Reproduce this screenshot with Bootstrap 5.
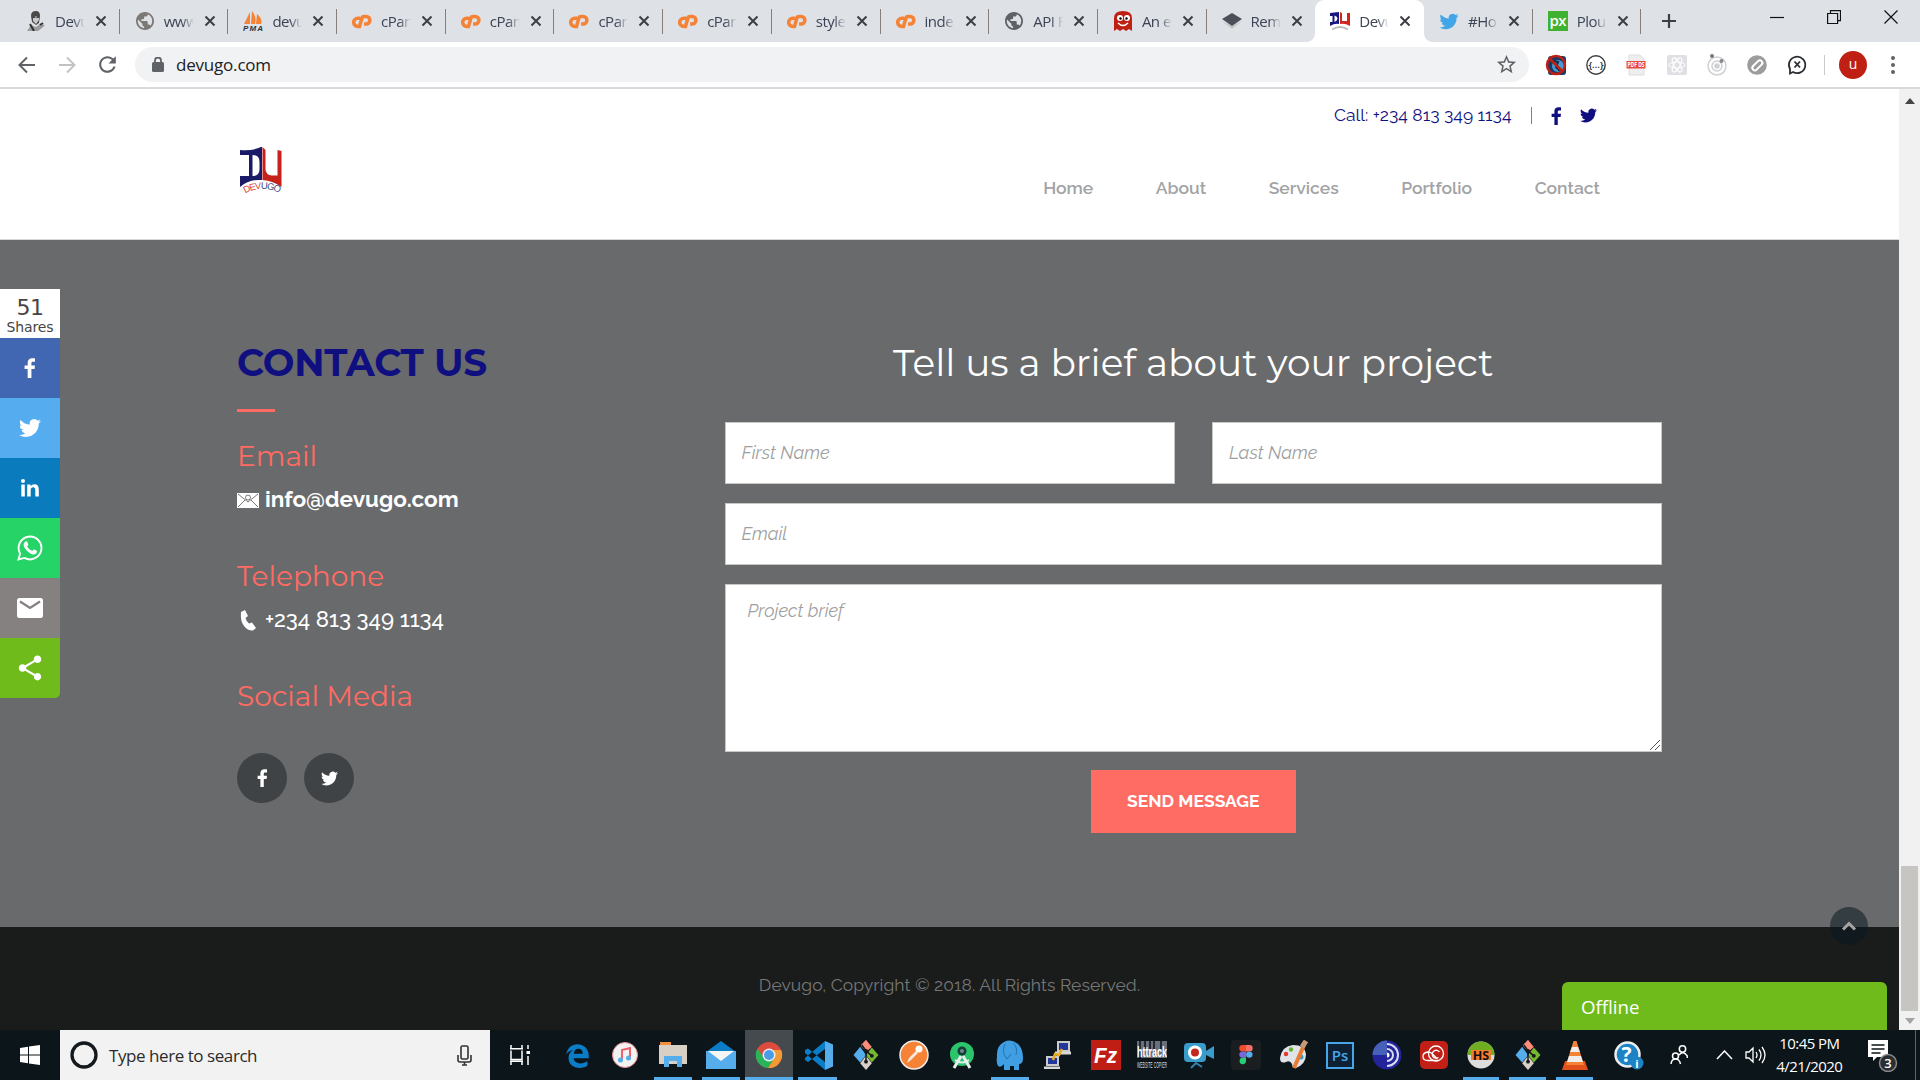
<!DOCTYPE html>
<html lang="en">
<head>
<meta charset="utf-8">
<title>Devugo</title>
<link href="https://cdn.jsdelivr.net/npm/bootstrap@5.3.0/dist/css/bootstrap.min.css" rel="stylesheet">
<style>
body{width:1920px;height:1080px;overflow:hidden;font-family:"Open Sans",sans-serif;color:#202124}
svg{display:block;flex:none}
/* browser chrome */
.tab-strip{height:42px;background:#dee1e6;padding-left:11px}
.b-tab{width:108.7px;padding-left:15px;position:relative}
.b-tab::after{content:"";position:absolute;right:0;top:9px;height:25px;width:1px;background:#85807c}
.b-tab.on{background:#fff;border-radius:9px 9px 0 0;height:42px}
.b-tab.on::after,.b-tab.on::before{content:"";position:absolute;top:auto;bottom:0;width:8px;height:8px}
.b-tab.on::before{left:-8px;background:radial-gradient(circle at 0 0,transparent 7.5px,#fff 8px)}
.b-tab.on::after{right:-8px;background:radial-gradient(circle at 100% 0,transparent 7.5px,#fff 8px)}
.b-tab.quiet::after{display:none}
.b-title{width:30px;margin-left:9px;font-size:15px;letter-spacing:-.5px;overflow:hidden;white-space:nowrap;-webkit-mask-image:linear-gradient(90deg,#000 60%,transparent);color:#3c4354}
.b-x{margin-left:10px}
.win-ctl{gap:43px;padding-right:22px;margin-bottom:9px}
.tool-row{height:47px;background:#fff;border-bottom:2px solid #d9d9de}
.nav-ic{gap:16px;padding-left:15px;width:135px}
.omni{height:35px;width:1394px;border-radius:18px;background:#f1f2f4;padding:0 11px 0 15px}
.omni-url{font-size:17px;letter-spacing:-.2px;margin-left:12px}
.omni .lock-ic{margin-left:2px}
.ext{gap:16.2px;padding-left:15px}
.tool-end{gap:14px;padding-right:23px}
.tool-sep{width:1px;height:20px;background:#c9cacd}
.me{width:28px;height:28px;background:#c02013;color:#fff;font-size:14px;line-height:26px}
/* site */
.view{height:941px}
.site{width:1899px;position:relative}
.wrap{width:1462.5px;margin:0 auto;padding:0 18.75px}
.site-head{height:151px;background:#fff;border-bottom:1px solid #d8d8d8}
.brand-ic{margin-top:56px}
.rale{font-family:Raleway,Lato,sans-serif}
.mont{font-family:Montserrat,Inter,sans-serif}
.navy{color:#100f80}
.coral{color:#ff6b62}
.call-row{height:53px;padding-right:65px;font-size:17.5px}
.call-sep{width:1.5px;height:17px;background:#e4564c;margin:0 19px}
.call-tw{margin-left:18px}
.menu-row{height:60px;gap:62.5px;padding-right:62px;font-size:17.5px;font-weight:600;color:#a2a3a5}
.contact{height:687px;background:#696a6c;padding-top:101px}
.row-g{--bs-gutter-x:37.5px}
.h-big{font-size:37.5px;line-height:43px;height:44px;margin:0;white-space:nowrap}
.h-us{letter-spacing:-.2px}
.h-mid{font-size:28px;line-height:34px;margin:0;font-weight:400;white-space:nowrap}
.h-line{width:38px;height:3px;background:#ff6b62;margin:24px 0 27px}
.info-l{height:30px;margin:12px 0 44px;color:#fff;font-size:22.5px;gap:6px}
.info-tel{font-size:22.2px}
.socials{gap:17px;margin-top:40px}
.round-ic{width:50px;height:50px;background:#3f4345}
.fld{height:62px;border:1px solid #c9c7c3;border-radius:0;background:#fff;padding:0 16px 1px;font-style:italic;font-size:18px}
.fld::placeholder{color:#9f9f9f;opacity:1}
textarea.fld{height:168px;padding:12px 22px;resize:none}
.stack{gap:19px;margin-top:37px}
.send{width:205px;height:63px;margin-top:-1px;border-radius:0;background:#fe6c63;color:#fff;font-weight:700;font-size:17.5px;border:0;letter-spacing:0}
.foot{height:103px;background:#1a1c1b;color:#767777;font-size:17.5px;padding-top:14px;letter-spacing:.05px}
.share{position:absolute;left:0;top:200px;width:60px}
.share>div{height:60px}
.share .cnt{height:49px;background:#fff;color:#454545;font-family:"DejaVu Sans",sans-serif;line-height:1}
.cnt-n{font-size:22px;padding-top:8px;letter-spacing:-.6px}
.cnt-l{font-size:14px;padding-top:1px;letter-spacing:-.1px}
.s-fb{background:#4267b2;border-top-right-radius:4px}
.s-tw{background:#55acee}
.s-in{background:#0a7bbd}
.s-wa{background:#25d366}
.s-ml{background:#858180}
.s-sh{background:#6fbb1b;border-bottom-right-radius:5px}
.to-top{position:absolute;left:1830px;top:818px;width:38px;height:38px;background:rgba(10,24,32,.55)}
.chat{position:absolute;left:1562px;top:893px;width:325px;height:48px;background:#6fbb1b;border-radius:6px 6px 0 0;color:#fff;font-size:18.700px;padding:2px 0 0 19px}
.sbar{width:21px;background:#f1f1f1}
.sb-up{margin-top:9px}
.sb-down{margin:7px 0 6px}
.thumb{width:17px;height:145px;background:#c6c5c1;margin-top:auto}
/* taskbar */
.task{height:50px;background:#0b151a}
.t-start{width:60px}
.t-search{width:430px;background:#f2f2f2;padding:0 18px 0 10px;font-size:17px;color:#2b2b2b}
.t-hint{letter-spacing:-.44px;padding-top:2px;margin-left:11px}
.t-view{width:63px;padding-right:4px}
.t-app{width:46.94px;position:relative}
.t-wide{width:48.1px}
.t-app.run::after{content:"";position:absolute;left:5px;right:5px;bottom:0;height:3px;background:#55adec}
.t-app.cur{background:#454a4e}
.t-app.cur::after{left:0!important;right:0!important}
.t-clock{font-size:15px;line-height:23px;width:86px;color:#fff;letter-spacing:-.55px;white-space:nowrap}
.tray-help{margin-left:16px}
.tray-ppl{margin-left:26px}
.tray-up{margin-left:28px}
.tray-vol{margin-left:12px}
.tray-note{margin-left:16px}
.desk-edge{width:5px;border-left:1px solid #5c6468}
</style>
<script src="https://cdn.jsdelivr.net/npm/bootstrap@5.3.0/dist/js/bootstrap.bundle.min.js"></script>
</head>
<body class="d-flex flex-column">
<svg width="0" height="0" class="position-absolute">
<defs>
<symbol id="x" viewBox="0 0 12 12"><path d="M1.500 1.500l9 9m0-9l-9 9" stroke="#3c3f43" stroke-width="2" fill="none"/></symbol>
<symbol id="cp" viewBox="0 0 24 20"><g fill="none" stroke="#f58235" stroke-width="4.200"><path d="M10 6H7a4.500 4.500 0 0 0 0 10h2l3-10.500Q12.500 4 14.500 4H17a4.500 4.500 0 0 1 0 9h-2.500"/></g></symbol>
<symbol id="globe" viewBox="1 2 22 20"><path d="M12 2C6.480 2 2 6.480 2 12s4.480 10 10 10 10-4.480 10-10S17.520 2 12 2zm-1 17.930c-3.950-.49-7-3.850-7-7.930 0-.62.08-1.210.21-1.790L9 15v1c0 1.100.9 2 2 2v1.930zm6.900-2.540c-.26-.81-1-1.390-1.900-1.390h-1v-3c0-.55-.45-1-1-1H8v-2h2c.55 0 1-.45 1-1V7h2c1.100 0 2-.9 2-2v-.41c2.930 1.190 5 4.060 5 7.410 0 2.080-.8 3.970-2.100 5.390z"/></symbol>
<symbol id="tw" viewBox="0 0 24 24"><path d="M23.953 4.570a10 10 0 01-2.825.775 4.958 4.958 0 002.163-2.723c-.951.555-2.005.959-3.127 1.184a4.920 4.920 0 00-8.384 4.482C7.690 8.095 4.067 6.130 1.640 3.162a4.822 4.822 0 00-.666 2.475c0 1.710.87 3.213 2.188 4.096a4.904 4.904 0 01-2.228-.616v.06a4.923 4.923 0 003.946 4.827 4.996 4.996 0 01-2.212.085 4.936 4.936 0 004.604 3.417 9.867 9.867 0 01-6.102 2.105c-.39 0-.779-.023-1.170-.067a13.995 13.995 0 007.557 2.209c9.053 0 13.998-7.496 13.998-13.985 0-.21 0-.42-.015-.63A9.935 9.935 0 0024 4.590z"/></symbol>
<symbol id="fb" viewBox="0 0 14 24"><path d="M13 .5v4h-2.500C9 4.500 8.700 5.300 8.700 6.500V9H13l-.6 4.200H8.700V24H4.200V13.200H.5V9h3.700V5.800C4.200 2.200 6.400.3 9.700.3c1.500 0 2.800.1 3.300.2z"/></symbol>
<symbol id="git" viewBox="0 0 30 36"><path fill="#fb6f66" d="M9 6l6-6 7 8-7 6z"/><path fill="#fb8f7c" d="M9 7l6 7 6-5-6-9z"/><path fill="#55adec" d="M8 8L0 18l8 9 7-9z"/><path fill="#76b82e" d="M22 9l8 9-8 9-7-9z"/><path fill="#d9cfc6" d="M8 28l7 8 7-8-7-9z"/><path d="M10 6l5 7v14M15 13l7 6" stroke="#14191b" stroke-width="1.800" fill="none"/><circle cx="15" cy="13" r="2.300" fill="#14191b"/><circle cx="15" cy="26" r="2.300" fill="#14191b"/><circle cx="22" cy="19" r="2.300" fill="#14191b"/></symbol>
</defs>
</svg>

<div class="tab-strip d-flex align-items-center">
  <div class="b-tab d-flex align-items-center h-100"><svg width="20" height="20" viewBox="0 0 20 20"><path d="M5 5q0-5 5-5 4 0 4 5l-1 7-3 2-4-3z" fill="#4a4a4a"/><path d="M7 5h6v4l-3 4-3-3z" fill="#c9c9c9"/><path d="M7 6h2.500m1 0H13" stroke="#222" stroke-width="1.500"/><path d="M1 20l4-6 5 2 4-3 5 1-3 3-4 3z" fill="#9b9b9b"/><path d="M4 13l4 7M14 14l3-2" stroke="#333" stroke-width="2"/></svg><span class="b-title">Devu</span><svg class="b-x" width="12" height="12"><use href="#x"/></svg></div>
  <div class="b-tab d-flex align-items-center h-100"><svg width="20" height="18" fill="#7b7876"><use href="#globe"/></svg><span class="b-title">www.</span><svg class="b-x" width="12" height="12"><use href="#x"/></svg></div>
  <div class="b-tab d-flex align-items-center h-100"><svg width="20" height="20" viewBox="0 0 20 20"><path d="M7 1v12H1zM9 0q5 6 3 13H8zM14 3q6 5 4 10h-5z" fill="#f58235"/><text x="0" y="19.500" font-size="8" font-weight="bold" font-style="italic" font-family="Liberation Sans" textLength="20" fill="#333">PMA</text></svg><span class="b-title">devu</span><svg class="b-x" width="12" height="12"><use href="#x"/></svg></div>
  <div class="b-tab d-flex align-items-center h-100"><svg width="20" height="17"><use href="#cp"/></svg><span class="b-title">cPan</span><svg class="b-x" width="12" height="12"><use href="#x"/></svg></div>
  <div class="b-tab d-flex align-items-center h-100"><svg width="20" height="17"><use href="#cp"/></svg><span class="b-title">cPan</span><svg class="b-x" width="12" height="12"><use href="#x"/></svg></div>
  <div class="b-tab d-flex align-items-center h-100"><svg width="20" height="17"><use href="#cp"/></svg><span class="b-title">cPan</span><svg class="b-x" width="12" height="12"><use href="#x"/></svg></div>
  <div class="b-tab d-flex align-items-center h-100"><svg width="20" height="17"><use href="#cp"/></svg><span class="b-title">cPan</span><svg class="b-x" width="12" height="12"><use href="#x"/></svg></div>
  <div class="b-tab d-flex align-items-center h-100"><svg width="20" height="17"><use href="#cp"/></svg><span class="b-title">style</span><svg class="b-x" width="12" height="12"><use href="#x"/></svg></div>
  <div class="b-tab d-flex align-items-center h-100"><svg width="20" height="17"><use href="#cp"/></svg><span class="b-title">inde</span><svg class="b-x" width="12" height="12"><use href="#x"/></svg></div>
  <div class="b-tab d-flex align-items-center h-100"><svg width="20" height="18" fill="#5f6164"><use href="#globe"/></svg><span class="b-title">API F</span><svg class="b-x" width="12" height="12"><use href="#x"/></svg></div>
  <div class="b-tab d-flex align-items-center h-100"><svg width="20" height="20" viewBox="0 0 20 20"><path d="M1 20V7q0-7 9-7t9 7v13l-3-2-3 2-3-2-3 2-3-2z" fill="#c02013"/><circle cx="7" cy="7" r="3" fill="#fff"/><circle cx="14" cy="7" r="3" fill="#fff"/><circle cx="7.500" cy="7.500" r="1.200"/><circle cx="13.500" cy="7.500" r="1.200"/><path d="M5 12q5 5 10 0" stroke="#fff" stroke-width="1.500" fill="none"/></svg><span class="b-title">An e</span><svg class="b-x" width="12" height="12"><use href="#x"/></svg></div>
  <div class="b-tab quiet d-flex align-items-center h-100"><svg width="20" height="16" viewBox="0 0 20 16"><path d="M0 8l10 8 10-8-10 5z" fill="#c8c4be"/><path d="M0 6l10-6 10 6-10 7z" fill="#4b5058"/></svg><span class="b-title">Rem</span><svg class="b-x" width="12" height="12"><use href="#x"/></svg></div>
  <div class="b-tab on d-flex align-items-center"><svg width="20" height="20" viewBox="0 0 20 20"><path d="M0 2l9-1v12q-4-1-9 2v-4h2.500V5H0z" fill="#17157f"/><path d="M4.500 4.500q3 1 3 3t-3 3.500z" fill="#fff"/><path d="M10 1l2 1v8h5V2h3v13q-5-3-10-2z" fill="#d0261d"/><path d="M2 18.500q8-5 16 0" stroke="#bbb" stroke-width="2" fill="none"/></svg><span class="b-title">Devu</span><svg class="b-x" width="12" height="12"><use href="#x"/></svg></div>
  <div class="b-tab d-flex align-items-center h-100"><svg width="20" height="19" fill="#41a6e8"><use href="#tw"/></svg><span class="b-title">#Ho</span><svg class="b-x" width="12" height="12"><use href="#x"/></svg></div>
  <div class="b-tab d-flex align-items-center h-100"><svg width="20" height="20" viewBox="0 0 20 20"><rect width="20" height="20" fill="#3fb331"/><text x="1.500" y="14.500" font-size="15" font-weight="600" textLength="17" fill="#fff" font-family="Open Sans">px</text></svg><span class="b-title">Plou</span><svg class="b-x" width="12" height="12"><use href="#x"/></svg></div>
  <svg class="ms-3 ps-1" width="20" height="16" viewBox="0 0 16 16"><path d="M8 1v14M1 8h14" stroke="#3c3f43" stroke-width="2.200"/></svg>
  <div class="win-ctl d-flex ms-auto align-items-start">
    <svg width="14" height="14" viewBox="0 0 14 14"><path d="M0 7.500h14" stroke="#111" stroke-width="1.200"/></svg>
    <svg width="14" height="14" viewBox="0 0 14 14"><path d="M.6 3.500h10v10H.6zM3.500 3.500V.6h10v10h-3" stroke="#111" stroke-width="1.200" fill="none"/></svg>
    <svg width="14" height="14" viewBox="0 0 14 14"><path d="M.5.5l13 13m0-13l-13 13" stroke="#111" stroke-width="1.200"/></svg>
  </div>
</div>

<div class="tool-row d-flex align-items-center">
  <div class="nav-ic d-flex align-items-center">
    <svg width="24" height="24" viewBox="0 0 24 24" fill="none" stroke="#5f6368" stroke-width="2"><path d="M20 12H5m7-7.500L4.500 12l7.500 7.500"/></svg>
    <svg width="24" height="24" viewBox="0 0 24 24" fill="none" stroke="#c3c3c1" stroke-width="2"><path d="M4 12h15m-7-7.500l7.500 7.500-7.500 7.500"/></svg>
    <svg width="25" height="25" viewBox="0 0 24 24" fill="#5f6368"><path d="M17.650 6.350C16.200 4.900 14.210 4 12 4c-4.420 0-7.990 3.580-7.990 8s3.570 8 7.990 8c3.730 0 6.840-2.550 7.730-6h-2.080c-.82 2.330-3.040 4-5.650 4-3.310 0-6-2.690-6-6s2.690-6 6-6c1.660 0 3.140.69 4.220 1.780L13 11h7V4l-2.350 2.350z"/></svg>
  </div>
  <div class="omni d-flex align-items-center">
    <svg class="lock-ic" width="12" height="16" viewBox="0 0 12 16"><rect y="5" width="12" height="10" rx="1.500" fill="#5f6368"/><path d="M3 6V3.500a3 3 0 0 1 6 0V6" fill="none" stroke="#5f6368" stroke-width="1.800"/></svg>
    <span class="omni-url">devugo.com</span>
    <svg class="ms-auto" width="23" height="23" viewBox="0 0 24 24" fill="#5f6368"><path d="M22 9.240l-7.190-.62L12 2 9.190 8.630 2 9.240l5.460 4.730L5.820 21 12 17.270 18.180 21l-1.630-7.030L22 9.240zM12 15.400l-3.760 2.270 1-4.280-3.320-2.880 4.380-.38L12 6.100l1.710 4.040 4.380.38-3.320 2.880 1 4.280L12 15.400z"/></svg>
  </div>
  <div class="ext d-flex align-items-center">
    <svg width="24" height="24" viewBox="0 0 24 24"><rect x="4" y="3" width="18" height="19" rx="3" fill="#173b66"/><circle cx="14" cy="13" r="6" fill="#4d97d0"/><path d="M9 8l5 1-2 5 4 4" stroke="#0f2c4e" stroke-width="2" fill="none"/><circle cx="12" cy="12" r="9" fill="none" stroke="#c02013" stroke-width="2.500"/><path d="M6 6l12 12" stroke="#c02013" stroke-width="2.500"/></svg>
    <svg width="24" height="24" viewBox="0 0 24 24"><circle cx="12" cy="12" r="9.200" fill="none" stroke="#3b3f44" stroke-width="1.400"/><text x="12" y="15" font-size="9.500" font-weight="600" text-anchor="middle" fill="#222">{...}</text></svg>
    <svg width="24" height="24" viewBox="0 0 24 24"><path d="M5 2h11l4 4v16H5z" fill="#eee" stroke="#ddd"/><rect x="2.500" y="8" width="19" height="7.500" fill="#e84a3c"/><text x="3.500" y="14" font-size="6.500" font-weight="bold" fill="#fff" textLength="17" lengthAdjust="spacingAndGlyphs">PDF DS</text></svg>
    <svg width="24" height="24" viewBox="0 0 24 24" fill="none" stroke="#fff"><rect x="2" y="2" width="20" height="20" rx="2" fill="#dfe0e3" stroke="none"/><ellipse cx="12" cy="12" rx="8" ry="3"/><ellipse cx="12" cy="12" rx="8" ry="3" transform="rotate(60 12 12)"/><ellipse cx="12" cy="12" rx="8" ry="3" transform="rotate(120 12 12)"/></svg>
    <svg width="24" height="24" viewBox="0 0 24 24" fill="none" stroke="#cfd1d4" stroke-width="1.500"><circle cx="12" cy="13" r="9"/><circle cx="12" cy="13" r="5"/><circle cx="12" cy="13" r="2" fill="#cfd1d4"/><circle cx="7" cy="3" r="2" fill="#777" stroke="none"/><circle cx="16.500" cy="8" r="2" fill="#888" stroke="none"/></svg>
    <svg width="24" height="24" viewBox="0 0 24 24"><circle cx="12" cy="12" r="9.800" fill="#9c9c9c"/><g fill="none" stroke="#fff" stroke-width="2"><rect x="6" y="10" width="12" height="5" rx="2.500" transform="rotate(-45 12 12)"/></g></svg>
    <svg width="24" height="24" viewBox="0 0 24 24" fill="none" stroke="#2b2e33" stroke-width="1.800"><path d="M5 20.500v-4.500a8.200 8.200 0 1 1 3 3z"/><path d="M9.500 8.500l5.500 6m0-6l-5.500 6"/></svg>
  </div>
  <div class="tool-end d-flex align-items-center ms-auto">
    <div class="tool-sep"></div>
    <div class="me rounded-circle text-center">u</div>
    <svg width="16" height="20" viewBox="0 0 16 20" fill="#5f6368"><circle cx="12" cy="3" r="2"/><circle cx="12" cy="10" r="2"/><circle cx="12" cy="17" r="2"/></svg>
  </div>
</div>

<div class="view d-flex">
  <div class="site">
    <header class="site-head">
      <div class="wrap d-flex">
        <svg class="brand-ic" width="50" height="52" viewBox="0 0 50 52">
          <path fill-rule="evenodd" d="M3 5q13 1 21-3h1v33Q12 34 3 42V31h9V10H3zM15.500 10v21q7 0 7-7v-7q0-7-7-7z" fill="#1a1a66"/>
          <path d="M25.500 2l3 3v20q1 5 6 5.500h6V5l4 1v36q-8-6-19-7z" fill="#c6211a"/>
          <path id="arc" d="M8 48.500Q25 39 45 49" fill="none"/><text font-family="Liberation Sans" font-size="9.500" fill="#e04438"><textPath href="#arc" textLength="36">DEV<tspan fill="#3b4a86">UGO</tspan></textPath></text>
        </svg>
        <div class="ms-auto rale">
          <div class="call-row navy d-flex align-items-center justify-content-end">
            <span>Call: +234 813 349 1134</span>
            <span class="call-sep"></span>
            <svg width="11" height="18" fill="#100f80"><use href="#fb"/></svg>
            <svg class="call-tw" width="17" height="17" fill="#100f80"><use href="#tw"/></svg>
          </div>
          <div class="menu-row d-flex align-items-center mt-3"><span>Home</span><span>About</span><span>Services</span><span>Portfolio</span><span>Contact</span></div>
        </div>
      </div>
    </header>

    <section class="contact">
      <div class="wrap">
        <div class="row row-g">
          <div class="col-4">
            <h1 class="h-big h-us mont navy fw-bold">CONTACT US</h1>
            <div class="h-line"></div>
            <h2 class="h-mid mont coral">Email</h2>
            <div class="info-l rale d-flex align-items-center fw-bold"><svg width="22" height="15" viewBox="0 0 22 15"><path d="M0 0h22v15H0z" fill="#fff"/><path d="M1 1l10 8 10-8M1 14l7-7m13 7l-7-7" fill="none" stroke="#77787a" stroke-width="1"/><circle cx="11" cy="4.500" r="2.500" fill="none" stroke="#77787a"/></svg><span>info@devugo.com</span></div>
            <h2 class="h-mid mont coral">Telephone</h2>
            <div class="info-l info-tel rale d-flex align-items-center fw-medium"><svg width="22" height="22" viewBox="0 0 22 22"><path d="M4 3l4-2 3 6-2.500 2q1 4 3.500 5.500l3-1 4 5.500-3 2.500Q11 22 7 17T4 3z" fill="#fff"/></svg><span>+234 813 349 1134</span></div>
            <h2 class="h-mid mont coral">Social Media</h2>
            <div class="socials d-flex">
              <div class="round-ic rounded-circle d-flex align-items-center justify-content-center"><svg width="11" height="18" fill="#fff"><use href="#fb"/></svg></div>
              <div class="round-ic rounded-circle d-flex align-items-center justify-content-center"><svg width="17" height="17" fill="#fff"><use href="#tw"/></svg></div>
            </div>
          </div>
          <div class="col-8">
            <h1 class="h-big mont text-white fw-normal text-center">Tell us a brief about your project</h1>
            <form class="stack d-flex flex-column rale">
              <div class="row row-g">
                <div class="col-6"><input class="form-control fld" placeholder="First Name"></div>
                <div class="col-6"><input class="form-control fld" placeholder="Last Name"></div>
              </div>
              <input class="form-control fld" placeholder="Email">
              <div class="position-relative"><textarea class="form-control fld" placeholder="Project brief"></textarea><svg class="position-absolute end-0 bottom-0" width="13" height="13" viewBox="0 0 13 13"><path d="M1 11L11 1M6 11l5-5" stroke="#555" stroke-width="1"/></svg></div>
              <button type="button" class="btn send mx-auto p-0">SEND MESSAGE</button>
            </form>
          </div>
        </div>
      </div>
    </section>

    <footer class="foot rale d-flex align-items-center justify-content-center">Devugo, Copyright © 2018. All Rights Reserved.</footer>

    <div class="share">
      <div class="cnt text-center"><span class="cnt-n d-block">51</span><span class="cnt-l d-block">Shares</span></div>
      <div class="s-fb d-flex align-items-center justify-content-center"><svg width="12" height="20" fill="#fff"><use href="#fb"/></svg></div>
      <div class="s-tw d-flex align-items-center justify-content-center"><svg width="22" height="22" fill="#fff"><use href="#tw"/></svg></div>
      <div class="s-in d-flex align-items-center justify-content-center"><svg width="18" height="18" viewBox="0 0 18 18" fill="#fff"><circle cx="2" cy="2" r="2"/><rect x=".3" y="5.500" width="3.500" height="12"/><path d="M6.200 5.500h3.400v1.700q1.200-2 3.700-2 4.500 0 4.500 5.300v7h-3.500v-6.200q0-3-2.200-3-2.400 0-2.400 3v6.200H6.200z"/></svg></div>
      <div class="s-wa d-flex align-items-center justify-content-center"><svg width="26" height="26" viewBox="0 0 26 26"><path d="M1.500 24.500l1.600-6a11.400 11.400 0 1 1 4.400 4.400z" fill="none" stroke="#fff" stroke-width="1.900"/><path d="M8.500 6.500q1-.7 1.700.3l1.100 2.500q.2.700-1.200 2.200 1.800 3.500 5.200 4.600l1.600-1.900 3 1.500q.5 3-3 3.700-3.200.2-7-3.600-3.900-4-3.200-6.800.5-1.700 1.800-2.500z" fill="#fff"/></svg></div>
      <div class="s-ml d-flex align-items-center justify-content-center"><svg width="26" height="20" viewBox="0 0 26 20"><rect width="26" height="20" rx="2.500" fill="#fff"/><path d="M3 3.500l10 6.500 10-6.500" fill="none" stroke="#858180" stroke-width="2.300"/></svg></div>
      <div class="s-sh d-flex align-items-center justify-content-center"><svg width="30" height="30" viewBox="0 0 24 24" fill="#fff"><path d="M18 16.080c-.76 0-1.440.3-1.960.77L8.910 12.700c.05-.23.09-.46.09-.7s-.04-.47-.09-.7l7.050-4.110c.54.5 1.250.81 2.040.81 1.660 0 3-1.340 3-3s-1.340-3-3-3-3 1.340-3 3c0 .24.04.47.09.7L8.040 9.810C7.500 9.310 6.790 9 6 9c-1.660 0-3 1.340-3 3s1.340 3 3 3c.79 0 1.500-.31 2.040-.81l7.120 4.160c-.05.21-.08.43-.08.65 0 1.610 1.310 2.920 2.920 2.920s2.920-1.310 2.920-2.920-1.310-2.920-2.920-2.920z"/></svg></div>
    </div>
    <div class="to-top rounded-circle d-flex align-items-center justify-content-center"><svg width="16" height="10" viewBox="0 0 16 10"><path d="M2 8.500l6-6 6 6" fill="none" stroke="#a5a5a3" stroke-width="3"/></svg></div>
    <div class="chat d-flex align-items-center">Offline</div>
  </div>
  <div class="sbar d-flex flex-column align-items-center">
    <svg class="sb-up" width="10" height="6"><path d="M0 6l5-6 5 6z" fill="#454545"/></svg>
    <div class="thumb"></div>
    <svg class="sb-down" width="10" height="6"><path d="M0 0l5 6 5-6z" fill="#a3a3a3"/></svg>
  </div>
</div>

<div class="task d-flex">
  <div class="t-start d-flex align-items-center justify-content-center"><svg width="20" height="20" viewBox="0 0 20 20" fill="#fff"><path d="M0 3l8-1.200v7.700H0zM9 1.600L20 0v9.500H9zM0 10.500h8v7.700L0 17zM9 10.500h11V20L9 18.400z"/></svg></div>
  <div class="t-search d-flex align-items-center"><svg width="28" height="28" viewBox="0 0 28 28"><circle cx="14" cy="14" r="12" fill="none" stroke="#14191d" stroke-width="3.300"/></svg><span class="t-hint">Type here to search</span><svg class="ms-auto" width="15" height="21" viewBox="0 0 15 21" fill="none" stroke="#333" stroke-width="1.600"><rect x="4" y="1" width="7" height="13" rx="1.500"/><path d="M1 10v5q0 2 2 2h9q2 0 2-2v-5M7.500 17v3M5 20h5"/></svg></div>
  <div class="t-view d-flex align-items-center justify-content-center"><svg width="20" height="20" viewBox="0 0 20 20" fill="none" stroke="#fff" stroke-width="1.500"><path d="M1 3.500V0M12 3.500V0M1 16.500V20M12 16.500V20M0 3.700h13M1 5.500v9h11v-9M0 16.300h13M18 0v4M18 11v9"/><path d="M16.500 7.500h3.500" stroke-width="3"/></svg></div>
  <div class="t-app t-wide d-flex align-items-center justify-content-center"><svg width="27" height="27" viewBox="0 0 24 24"><path fill="#0b7cc6" fill-rule="evenodd" d="M2 11C3 5 7 2 12 2c6 0 10 4.500 10 10v2.500H8.500c.3 3 3 4.500 6 4.500 2.300 0 4.500-.7 6.300-1.800v4C19 22.500 16.500 23 14 23c-6 0-10-3.500-10-9 0-3 1.500-5.500 4-7-3 .8-5 2-6 4zM8.700 10.500h8c0-3-1.500-4.500-4-4.500-2.200 0-3.700 1.700-4 4.500z"/></svg></div>
  <div class="t-app t-wide d-flex align-items-center justify-content-center"><svg width="28" height="28" viewBox="0 0 28 28"><circle cx="14" cy="14" r="12.500" fill="#f2f2f2" stroke="#e98c93" stroke-width="1"/><path d="M11 19V9l8-2v10" fill="none" stroke="#f0606a" stroke-width="2"/><circle cx="9.500" cy="19" r="2.500" fill="#55adec"/><circle cx="17.500" cy="17" r="2.500" fill="#55adec"/></svg></div>
  <div class="t-app t-wide run d-flex align-items-center justify-content-center"><svg width="28" height="26" viewBox="0 0 28 26"><path d="M1 0h11v4H1z" fill="#f0903e"/><path d="M0 3h28v19H0z" fill="#d8d0c4"/><path d="M5 25V14h18v11h-5v-6h-8v6z" fill="#55adec"/></svg></div>
  <div class="t-app t-wide run d-flex align-items-center justify-content-center"><svg width="30" height="28" viewBox="0 0 30 28"><path d="M0 11L15 0l15 11z" fill="#0b7cc6"/><path d="M0 10h30v18H0z" fill="#55adec"/><path d="M2 10h26L15 20z" fill="#f5f5f5"/></svg></div>
  <div class="t-app t-wide run cur d-flex align-items-center justify-content-center"><svg width="28" height="28" viewBox="0 0 28 28"><circle cx="14" cy="14" r="13" fill="#dd4b3e"/><path d="M2.500 7.500A13 13 0 0 0 13 27l6-9-10-1z" fill="#27b45a"/><path d="M27 12A13 13 0 0 1 13 27l6.500-10L18 9h8q1 1.500 1 3z" fill="#f49a35"/><circle cx="14" cy="14" r="6.500" fill="#eee"/><circle cx="14" cy="14" r="5" fill="#4a9be8"/></svg></div>
  <div class="t-app t-wide run d-flex align-items-center justify-content-center"><svg width="30" height="29" viewBox="0 0 30 29"><path d="M2 9l3-1.500L22 21v8L2 12zM2 19l3 2L22 8V0L2 17z" fill="#0b7cc6"/><path d="M22 0l8 3.500v22L22 29z" fill="#55adec"/></svg></div>
  <div class="t-app t-wide d-flex align-items-center justify-content-center"><svg width="30" height="30"><use href="#git"/></svg></div>
  <div class="t-app t-wide d-flex align-items-center justify-content-center"><svg width="30" height="30" viewBox="0 0 30 30"><circle cx="15" cy="15" r="14" fill="#f58235" stroke="#eee" stroke-width="1.500"/><path d="M8 23l2-5 7-7 2 2-7 7z" fill="#f7e7dc"/><circle cx="20" cy="9" r="3.500" fill="#fff"/></svg></div>
  <div class="t-app t-wide d-flex align-items-center justify-content-center"><svg width="24" height="28" viewBox="0 0 24 28"><circle cx="12" cy="13" r="12" fill="#2bc46b"/><circle cx="12" cy="10" r="4.500" fill="#173c38"/><path d="M11 15L4 27M13 15l7 12" stroke="#e8eef0" stroke-width="3"/><path d="M5 19q7 5 14 0" fill="none" stroke="#e8eef0" stroke-width="2"/><circle cx="12" cy="10" r="2" fill="#6e8a8c"/></svg></div>
  <div class="t-app t-wide run d-flex align-items-center justify-content-center"><svg width="28" height="30" viewBox="0 0 28 30"><path d="M1 17Q0 6 8 2q8-4 15 3 4 5 4 13 0 6-4 6v6h-5v-4h-4v4H8v-6q-3 4-6 2-2-4-1-9z" fill="#409fe3"/><path d="M9 4q-4 8 2 15l4-5M17 3q5 4 3 12" fill="none" stroke="#1f73b3" stroke-width="1"/></svg></div>
  <div class="t-app t-wide d-flex align-items-center justify-content-center"><svg width="28" height="28" viewBox="0 0 28 28"><g stroke="#ccc" stroke-width="2" fill="#24379b"><rect x="14" y="1" width="11" height="9"/><rect x="3" y="16" width="11" height="8"/></g><path d="M11 12h16M0 27h16" stroke="#d8d8d8" stroke-width="3"/><path d="M18 8l-3 6-4-1-2 6" stroke="#e7ad26" stroke-width="2.500" fill="none"/></svg></div>
  <div class="t-app d-flex align-items-center justify-content-center"><svg width="30" height="30" viewBox="0 0 30 30"><rect width="30" height="30" fill="#bf1e14"/><text x="3" y="23" font-size="22" font-weight="bold" font-style="italic" fill="#fff" font-family="Liberation Sans" textLength="23" lengthAdjust="spacingAndGlyphs">Fz</text></svg></div>
  <div class="t-app d-flex align-items-center justify-content-center"><svg width="30" height="28" viewBox="0 0 30 28"><rect width="30" height="17" fill="#6a6f78"/><path d="M3 0v17M8 0v8M13 0v8M17 0v8M24 0v8" stroke="#1e2a3a" stroke-width="2"/><text x="0" y="16" font-size="14" font-weight="bold" fill="#fff" font-family="Liberation Sans" textLength="30" lengthAdjust="spacingAndGlyphs">httrack</text><text x="0" y="27" font-size="8.500" fill="#ddd" font-family="Liberation Sans" textLength="30" lengthAdjust="spacingAndGlyphs">WEBSITE COPIER</text></svg></div>
  <div class="t-app d-flex align-items-center justify-content-center"><svg width="30" height="28" viewBox="0 0 30 28"><rect y="2" width="22" height="19" rx="4" fill="#3a9cca"/><path d="M22 10l8-5v13l-8-4z" fill="#3a9cca"/><path d="M7 27l5-5 6 4" fill="none" stroke="#3182ad" stroke-width="2"/><circle cx="11" cy="11.500" r="7" fill="#fff"/><circle cx="11" cy="11.500" r="4" fill="#c3271d"/></svg></div>
  <div class="t-app d-flex align-items-center justify-content-center"><svg width="30" height="30" viewBox="0 0 30 30"><rect width="30" height="30" rx="4" fill="#1b1e20"/><path d="M15 5h-3.500a3.200 3.200 0 0 0 0 6.400H15z" fill="#ee4d2b"/><path d="M15 5h3.500a3.200 3.200 0 0 1 0 6.400H15z" fill="#fb6f66"/><path d="M15 11.400h-3.500a3.200 3.200 0 0 0 0 6.400H15z" fill="#7a67dd"/><circle cx="18.300" cy="14.600" r="3.200" fill="#55adec"/><path d="M15 17.800h-3.500a3.200 3.200 0 1 0 3.500 3.200z" fill="#26cf76"/></svg></div>
  <div class="t-app d-flex align-items-center justify-content-center"><svg width="30" height="30" viewBox="0 0 30 30"><path d="M2 18Q4 6 15 5q12 0 13 9 0 10-10 14-4 0-4-4-2-4-6-2-6 2-6-4z" fill="#e0e4e8"/><circle cx="8" cy="14" r="2.200" fill="#e8382d"/><circle cx="13" cy="9.500" r="2.200" fill="#63b32e"/><circle cx="23" cy="17" r="2.500" fill="#3a9cca"/><path d="M26 5L16 28" stroke="#ea7b32" stroke-width="4"/><path d="M28 1l-4 6" stroke="#c49a78" stroke-width="5"/></svg></div>
  <div class="t-app d-flex align-items-center justify-content-center"><svg width="28" height="27" viewBox="0 0 28 27"><rect x="1" y="1" width="26" height="25" fill="#0d2034" stroke="#48a5e8" stroke-width="2"/><text x="14" y="18.500" text-anchor="middle" font-size="15" font-weight="600" fill="#48a5e8" font-family="Open Sans">Ps</text></svg></div>
  <div class="t-app d-flex align-items-center justify-content-center"><svg width="30" height="30" viewBox="0 0 30 30"><circle cx="15" cy="15" r="14.500" fill="#24249a"/><path d="M15 .5a14.500 14.500 0 0 0-14.500 14.500h14.500z" fill="#4760ba"/><path d="M15 4a11 11 0 0 1 0 22M15 9a6 6 0 0 1 0 12" fill="none" stroke="#d7dcf1" stroke-width="2"/><path d="M15 12.500a2.500 2.500 0 0 1 0 5z" fill="#fff"/></svg></div>
  <div class="t-app d-flex align-items-center justify-content-center"><svg width="28" height="28" viewBox="0 0 28 28"><rect width="28" height="28" rx="5" fill="#c21f16"/><g fill="none" stroke="#fff" stroke-width="1.300"><circle cx="16" cy="12.500" r="7.500"/><path d="M18.500 16.500a4 4 0 1 1 1-5.500M8 19.500q-5 0-5-4t5-4.500q3 0 5 2.500l4 4M8 19.500h10"/></g></svg></div>
  <div class="t-app run d-flex align-items-center justify-content-center"><svg width="28" height="28" viewBox="0 0 28 28"><circle cx="14" cy="14" r="13.500" fill="#ddd"/><path d="M.5 14a13.500 13.500 0 0 1 27 0z" fill="#6fae20"/><path d="M4 9h20v10H4z" fill="#f47d2f"/><text x="14" y="18.500" text-anchor="middle" font-size="12.500" font-weight="bold" font-family="Open Sans" fill="#111">HS</text></svg></div>
  <div class="t-app run d-flex align-items-center justify-content-center"><svg width="30" height="30"><use href="#git"/></svg></div>
  <div class="t-app run d-flex align-items-center justify-content-center"><svg width="26" height="29" viewBox="0 0 26 29"><path d="M3 20h20l3 9H0z" fill="#e2501c"/><path d="M11.500 0h3L22 24H4z" fill="#f58235"/><path d="M10 6h6l2 5H8zM7 15h12l2 6H5z" fill="#eee"/></svg></div>
  <div class="d-flex align-items-center flex-grow-1">
    <svg class="tray-help" width="30" height="32" viewBox="0 0 30 32"><circle cx="13.500" cy="15.500" r="12" fill="#1c84c6" stroke="#eee" stroke-width="2.500"/><text x="12.500" y="23" text-anchor="middle" font-size="21" font-weight="bold" fill="#fff" font-family="Open Sans">?</text><circle cx="23" cy="24" r="6.500" fill="#1c84c6"/><text x="23" y="28.500" text-anchor="middle" font-size="11" font-weight="bold" fill="#fff">i</text></svg>
    <svg class="tray-ppl" width="18" height="20" viewBox="0 0 18 20" fill="none" stroke="#fff" stroke-width="1.500"><circle cx="12.500" cy="4" r="3.200"/><path d="M9 10q4-5 8.300 1v2"/><circle cx="5.500" cy="11" r="3"/><path d="M1 19q.5-5 4.500-5t5 5"/></svg>
    <svg class="tray-up" width="17" height="10" viewBox="0 0 17 10"><path d="M1 9l7.500-8L16 9" fill="none" stroke="#fff" stroke-width="1.500"/></svg>
    <svg class="tray-vol" width="21" height="18" viewBox="0 0 21 18" fill="none" stroke="#fff" stroke-width="1.300"><path d="M1 6h3l4-4v14l-4-4H1zM11 6q2 3 0 6M14 3.500q4 5.500 0 11M17 1q6 8 0 16"/></svg>
    <div class="t-clock text-center"><div>10:45 PM</div><div>4/21/2020</div></div>
    <svg class="tray-note" width="32" height="34" viewBox="0 0 32 34"><path d="M0 2h20v17H9l-4 4v-4H0z" fill="#fff"/><path d="M3.500 7h13M3.500 11h13M3.500 15h9" stroke="#0b151a" stroke-width="1.500"/><circle cx="20" cy="25" r="8.500" fill="#2b2e30" stroke="#8a8a8a" stroke-width="1.500"/><text x="20" y="30" text-anchor="middle" font-size="13" font-weight="600" fill="#fff">3</text></svg>
  </div>
  <div class="desk-edge"></div>
</div>
</body>
</html>
